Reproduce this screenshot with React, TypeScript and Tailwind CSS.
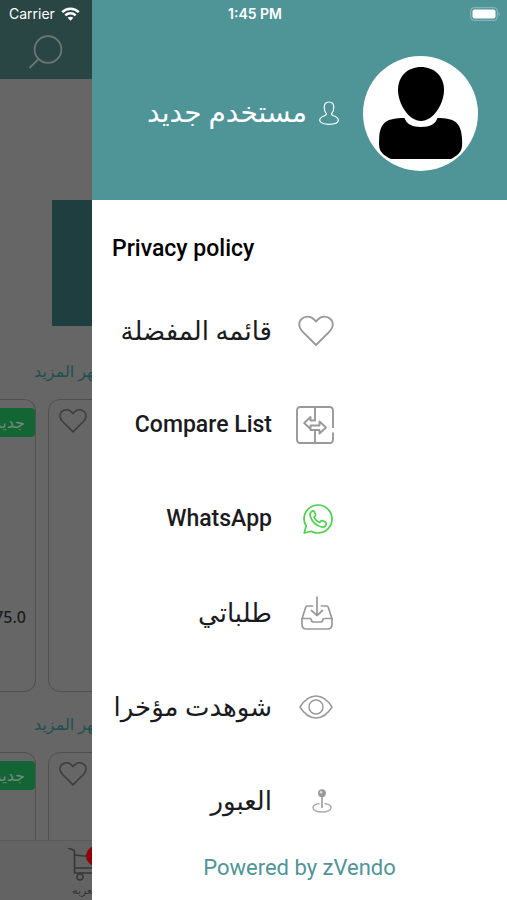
import type { ReactNode } from "react"

type MenuItem = {
  label: string
  icon: ReactNode
  rtl?: boolean
}

function SearchIcon() {
  return (
    <svg width="36" height="36" viewBox="0 0 36 36" fill="none" stroke="#6c7776" strokeWidth="1.800">
      <circle cx="20" cy="15.500" r="13.400" />
      <path d="M10.500 25L2 33.500" strokeLinecap="round" />
    </svg>
  )
}

function WifiIcon() {
  return (
    <svg width="19" height="14" viewBox="0 0 19 14" fill="none" stroke="#fff" strokeWidth="2.500">
      <path d="M1.200 5.200C5.800 0.600 13.200 0.600 17.800 5.200" />
      <path d="M4.300 8.300C7.200 5.500 11.800 5.500 14.700 8.300" />
      <path d="M9.500 13.800L6.600 10.800C8.200 9.400 10.800 9.400 12.400 10.800Z" fill="#fff" stroke="none" />
    </svg>
  )
}

function BatteryIcon() {
  return (
    <svg width="31" height="14" viewBox="0 0 31 14" fill="none">
      <rect x="0.700" y="0.700" width="26.600" height="12.600" rx="3.600" stroke="#86b4b7" strokeWidth="1.200" />
      <rect x="2.500" y="2.500" width="23" height="9" rx="2" fill="#fff" />
      <path d="M28.500 5C30.300 5.600 30.300 8.400 28.500 9Z" fill="#86b4b7" />
    </svg>
  )
}

function UserIcon() {
  return (
    <svg width="20" height="24" viewBox="0 0 20 24" fill="none" stroke="#fff" strokeWidth="1.200">
      <path d="M7.500 12.800C6 11.500 5.200 9.500 5.200 6.600C5.200 3 7 1 10 1S14.800 3 14.800 6.600C14.800 9.500 14 11.500 12.500 12.800C12.500 14 13 14.200 14.500 14.700C17.500 15.700 19.300 17.200 19.300 19.300C19.300 22 15 23.300 10 23.300S0.700 22 0.700 19.300C0.700 17.200 2.500 15.700 5.500 14.700C7 14.200 7.500 14 7.500 12.800Z" />
    </svg>
  )
}

function Avatar() {
  return (
    <svg width="115" height="115" viewBox="0 0 115 115" className="shrink-0 rounded-full bg-white">
      <path d="M58 11C71 11 81 20 81 34C81 48 70 65 58 65S35 48 35 34C35 20 45 11 58 11Z" />
      <path d="M41.500 62C43.500 68 49 71 58 71S72.500 68 74.500 62C91 62 98 66 99 82C99.600 93 99.300 97 88 103H28C16 97 15.600 93 16.200 82C17 66 24 62 41.500 62Z" />
    </svg>
  )
}

function HeartIcon({ size, color }: { size: number; color: string }) {
  return (
    <svg width={size} height={size} viewBox="0 0 36 36" fill="none" stroke={color} strokeWidth="1.900" strokeLinejoin="round">
      <path d="M18 32L4.300 18.300C0.300 14.200 0.200 9 3.500 6C7 2.700 12.800 2.800 16 6.300L18 8.500L20 6.300C23.200 2.800 29 2.700 32.500 6C35.800 9 35.700 14.200 31.700 18.300Z" />
    </svg>
  )
}

function CompareIcon() {
  return (
    <svg width="38" height="38" viewBox="0 0 38 38" fill="none" stroke="#999" strokeWidth="1.900" strokeLinejoin="round">
      <path d="M37 22V4.500Q37 1 33.500 1H4.500Q1 1 1 4.500V33.500Q1 37 4.500 37H33.500Q37 37 37 33.500V26.500" />
      <path d="M19 1V14.500H14.500V11L8.200 17L14.500 23V19.500H23.500V15.500L30 21.500L23.500 27.500V24H14.500V20M19 24V37" />
    </svg>
  )
}

function WhatsAppIcon() {
  return (
    <svg width="31" height="30" viewBox="0 0 31 30" fill="none" stroke="#4bd14b" strokeWidth="1.700" strokeLinejoin="round">
      <path d="M1.200 29L3.200 22C1.800 20 1 17.600 1 15A14 14 0 1 1 15 29C12.500 29 10.200 28.300 8.200 27.200Z" />
      <path d="M9 7.200C7.300 8.200 6.600 10 7.400 12.400C9 17.200 13 21.200 18 22.700C20.500 23.500 22.500 22.500 23.200 20.500C23.600 19.300 23.300 18.600 22.300 18.100L19.600 16.800C18.700 16.400 18.200 16.600 17.600 17.400L16.700 18.500C14.300 17.600 12.200 15.700 11.100 13.300L12.100 12C12.700 11.300 12.700 10.700 12.400 10L11.300 7.700C10.800 6.700 10 6.600 9 7.200Z" />
    </svg>
  )
}

function OrdersIcon() {
  return (
    <svg width="33" height="34" viewBox="0 0 33 34" fill="none" stroke="#999" strokeWidth="1.700" strokeLinecap="round" strokeLinejoin="round">
      <path d="M16 1V19M10.500 14.500L16 19.500L21.500 14.500" />
      <path d="M11.500 10H6.500Q5 10 4.600 11.500L1 23V28.500Q1 33 5.500 33H26.500Q31 33 31 28.500V23L27.400 11.500Q27 10 25.500 10H20.500" />
      <path d="M1 22.500H8.500Q10 22.500 10.300 24Q10.600 26 12.500 26H19.500Q21.400 26 21.700 24Q22 22.500 23.500 22.500H31" />
    </svg>
  )
}

function EyeIcon() {
  return (
    <svg width="35" height="24" viewBox="0 0 35 24" fill="none" stroke="#999" strokeWidth="1.500">
      <path d="M1 12C5 5.500 10.500 1 17 1S29 5.500 33 12C29 18.500 23.500 23 17 23S5 18.500 1 12Z" strokeLinejoin="round" />
      <circle cx="17" cy="12" r="7" />
    </svg>
  )
}

function PinIcon() {
  return (
    <svg width="22" height="24" viewBox="0 0 22 24" fill="none" stroke="#aaa" strokeWidth="1.400">
      <path d="M7.500 14.500C3.500 15 1 16.600 1 18.700C1 21.300 5 23 10 23S19 21.300 19 18.700C19 16.600 16.500 15 12.500 14.500" />
      <path d="M10 7V19" strokeWidth="1.900" />
      <circle cx="10" cy="4.200" r="3.900" fill="#999" stroke="none" />
      <circle cx="9" cy="3.300" r="1.200" fill="#ddd" stroke="none" />
    </svg>
  )
}

function CartIcon() {
  return (
    <svg width="34" height="36" viewBox="0 0 34 36" fill="none" stroke="#373737" strokeWidth="1.600" strokeLinecap="round">
      <path d="M1 1.500L4.500 2.500Q6.500 3 6.500 5.500V26H32" />
      <path d="M7 8L16 9H32M7 21H32" />
      <circle cx="12" cy="30" r="3" />
      <circle cx="28" cy="30" r="3" />
    </svg>
  )
}

const menu: MenuItem[] = [
  { label: "قائمه المفضلة", icon: <HeartIcon size={36} color="#999" />, rtl: true },
  { label: "Compare List", icon: <CompareIcon /> },
  { label: "WhatsApp", icon: <WhatsAppIcon /> },
  { label: "طلباتي", icon: <OrdersIcon />, rtl: true },
  { label: "شوهدت مؤخرا", icon: <EyeIcon />, rtl: true },
  { label: "العبور", icon: <PinIcon />, rtl: true },
]

// One strip of product cards, cut off by the drawer
function ProductRow({ price }: { price?: string }) {
  return (
    <div className="flex h-[293px] shrink-0 gap-3">
      <div className="flex w-9 shrink-0 flex-col items-end rounded-r-xl border border-l-0 border-[#505050] pt-2">
        <span className="flex h-[29px] w-9 items-center justify-end rounded-r bg-[#136535] pr-[10px] text-base whitespace-nowrap text-[#6e8c78]">
          <bdi>جديد</bdi>
        </span>
        {price && <span className="mt-[168px] pr-[9px] font-['Noto_Sans'] text-base font-medium text-[#1c1c1c]">{price}</span>}
      </div>
      <div className="w-40 shrink-0 rounded-xl border border-[#505050] pt-[7px] pl-[10px]">
        <button aria-label="أضف إلى المفضلة">
          <HeartIcon size={28} color="#3c3c3c" />
        </button>
      </div>
    </div>
  )
}

function MoreLink() {
  return (
    <a href="#more" className="block h-[60px] shrink-0 pt-[19px] pl-[34px] text-base leading-7 whitespace-nowrap text-[#21504f]">
      أظهر المزيد
    </a>
  )
}

export default function App() {
  return (
    <div className="relative flex h-screen overflow-hidden bg-white font-['Roboto','DejaVu_Sans',sans-serif]">
      {/* Status bar */}
      <div className="absolute inset-x-0 top-0 z-10 grid h-7 grid-cols-3 items-center pr-[6px] pl-[9px] font-['Inter',sans-serif] text-sm text-white">
        <span className="flex items-center gap-[6px]">
          Carrier <WifiIcon />
        </span>
        <span className="text-center font-semibold">1:45 PM</span>
        <span className="flex justify-end">
          <BatteryIcon />
        </span>
      </div>

      {/* Dimmed store page */}
      <main className="flex w-[92px] shrink-0 flex-col overflow-hidden bg-[#666]">
        <header className="h-[79px] shrink-0 bg-[#294544] pt-[34px] pl-7">
          <button aria-label="بحث">
            <SearchIcon />
          </button>
        </header>
        <div className="mt-[121px] mb-[13px] ml-[52px] h-[126px] shrink-0 bg-[#1f3e3f]" />
        <MoreLink />
        <ProductRow price="75.0" />
        <MoreLink />
        <div className="min-h-0 flex-1 overflow-hidden">
          <ProductRow />
        </div>
        <nav className="h-[60px] shrink-0 border-t border-[#5a5a5a] bg-[#636363]">
          <a href="#cart" className="relative flex flex-col pt-[6px] pl-[68px] text-[11px] leading-4 whitespace-nowrap text-[#333]">
            <CartIcon />
            <span className="absolute top-[5px] left-[86px] size-5 rounded-full bg-[#900409]" />
            <span className="pl-1">العربه</span>
          </a>
        </nav>
      </main>

      {/* Drawer */}
      <aside className="flex min-w-0 flex-1 flex-col bg-white">
        <div className="flex h-[200px] shrink-0 items-center justify-end gap-6 bg-[#4f9497] pt-[26px] pr-[29px]">
          <div className="flex items-center gap-3 text-white">
            <span className="text-[28px] whitespace-nowrap" dir="rtl">مستخدم جديد</span>
            <UserIcon />
          </div>
          <Avatar />
        </div>

        <nav className="flex flex-col text-[23px] text-[#1b1b1f]">
          <a href="#privacy" className="flex h-[84px] items-center pt-[14px] pl-5 font-medium text-black">
            Privacy policy
          </a>
          {menu.map((item) => (
            <button key={item.label} className="flex h-[94px] w-[242px] items-center justify-end gap-6">
              <span className={item.rtl ? "text-[26px] whitespace-nowrap" : "font-medium whitespace-nowrap"} dir={item.rtl ? "rtl" : "ltr"}>
                {item.label}
              </span>
              <span className="flex w-[38px] shrink-0 justify-end">{item.icon}</span>
            </button>
          ))}
        </nav>

        <p className="pt-1 text-center text-[22px] leading-8 text-[#4f9497]">Powered by zVendo</p>
      </aside>
    </div>
  )
}
